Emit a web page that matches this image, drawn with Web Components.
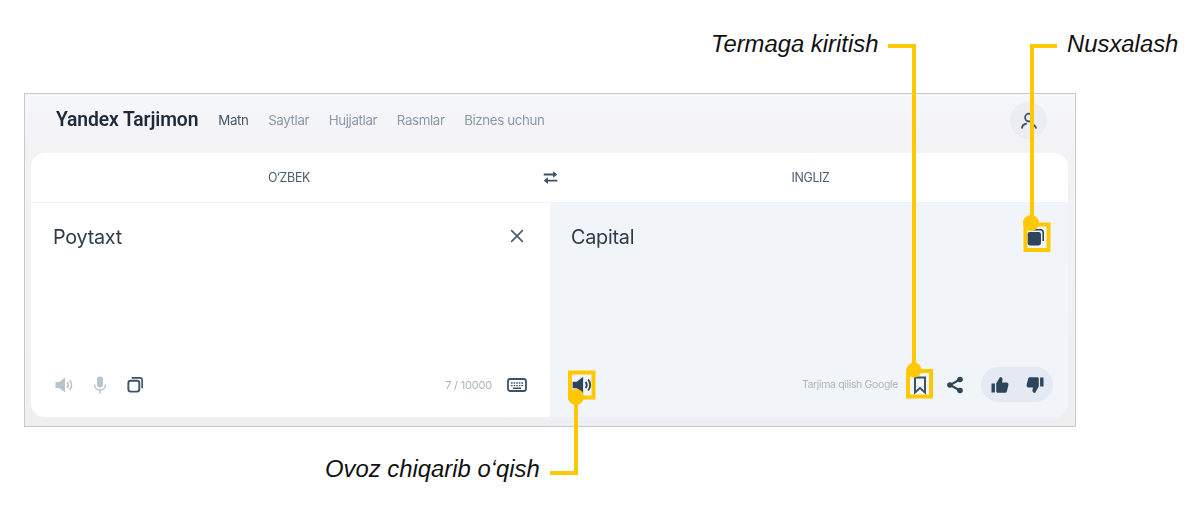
<!DOCTYPE html>
<html lang="uz">
<head>
<meta charset="utf-8">
<title>Yandex Tarjimon</title>
<style>
  html, body { margin: 0; background: #fff; }
  body { width: 1202px; height: 505px; overflow: hidden; position: relative; font-family: "Inter", "Liberation Sans", sans-serif; }
</style>
</head>
<body>
<ya-stage>
  <ya-window>
    <ya-header></ya-header>
    <ya-translator></ya-translator>
  </ya-window>
  <ya-callouts></ya-callouts>
</ya-stage>

<script>
const ICONS = {
  speaker: `<path fill="currentColor" d="M1.500 7h3.800L11 2.500v15L5.300 13H1.500z"/><path fill="none" stroke="currentColor" stroke-width="1.700" d="M13.200 7.200c1.300 1.600 1.300 4 0 5.600M15.600 5c2.400 2.900 2.400 7.100 0 10"/>`,
  mic: `<rect x="7" y="1.500" width="6" height="11" rx="3" fill="currentColor"/><path fill="none" stroke="currentColor" stroke-width="1.600" d="M4.500 9.500c0 3.200 2.400 5.500 5.500 5.500s5.500-2.300 5.500-5.500M10 15v3.500"/>`,
  copy: `<rect x="2.500" y="6" width="11.500" height="11.500" rx="2.400" fill="none" stroke="currentColor" stroke-width="2"/><path fill="none" stroke="currentColor" stroke-width="1.700" d="M6 3h8.500A2.500 2.500 0 0 1 17 5.500V14"/>`,
  copyFull: `<rect x="1.500" y="5" width="13.500" height="13.500" rx="2.400" fill="currentColor"/><path fill="none" stroke="currentColor" stroke-width="1.600" d="M7 2.800h7.800a2.400 2.400 0 0 1 2.400 2.400V14"/>`,
  keyboard: `<rect x="1" y="4" width="18" height="12" rx="2.200" fill="none" stroke="currentColor" stroke-width="1.800"/><path fill="none" stroke="currentColor" stroke-width="1.400" stroke-dasharray="1.600 1" d="M4 8h12M4 10.600h12"/><path stroke="currentColor" stroke-width="1.500" d="M6 13.300h8"/>`,
  swap: `<path fill="currentColor" d="M13 2.500l5 3.900-5 3.900V7.500H2V5.300h11zM7 9.700v2.800h11v2.200H7v2.800l-5-3.900z"/>`,
  close: `<path fill="none" stroke="currentColor" stroke-width="1.900" d="M3.500 3.500l13 13M16.500 3.500l-13 13"/>`,
  bookmark: `<path fill="none" stroke="currentColor" stroke-width="2" d="M5 2.500h10v15l-5-4.400-5 4.400z"/>`,
  share: `<circle cx="15" cy="4.500" r="2.800" fill="currentColor"/><circle cx="15" cy="15.500" r="2.800" fill="currentColor"/><circle cx="5" cy="10" r="2.800" fill="currentColor"/><path fill="none" stroke="currentColor" stroke-width="2" d="M15 4.500L5 10l10 5.500"/>`,
  up: `<path fill="currentColor" d="M1.500 8.500h3.400v9H1.500zM6.200 8.600L10 2c1.500 0 2.600 1 2.600 2.500L12 7.500h4.500c1.300 0 2.200 1.200 1.900 2.400l-1.500 6.300c-.3 1-1.100 1.500-2 1.500H7.700c-.8 0-1.500-.7-1.500-1.500z"/>`,
  down: `<path fill="currentColor" d="M18.500 11.500h-3.400v-9h3.400zM13.800 11.400L10 18c-1.500 0-2.600-1-2.600-2.500L8 12.500H3.500c-1.300 0-2.200-1.200-1.900-2.400l1.500-6.300c.3-1 1.100-1.500 2-1.500h7.200c.8 0 1.500.7 1.500 1.500z"/>`,
  user: `<circle cx="10" cy="6.600" r="3.900" fill="none" stroke="currentColor" stroke-width="1.800"/><path fill="none" stroke="currentColor" stroke-width="1.800" d="M2.800 17.500c.5-3.200 3-4.700 5-5M17.200 17.500c-.4-1.800-1.500-3.100-3-4"/>`
};

class YaIcon extends HTMLElement {
  connectedCallback() {
    const size = this.getAttribute('size') || 20;
    const color = this.getAttribute('color') || '#3c5267';
    this.attachShadow({ mode: 'open' }).innerHTML = `
      <style>:host { display: flex; width: ${size}px; height: ${size}px; color: ${color}; flex: none; } svg { width: 100%; height: 100%; display: block; }</style>
      <svg viewBox="0 0 20 20">${ICONS[this.getAttribute('name')]}</svg>`;
  }
}

class YaStage extends HTMLElement {
  constructor() {
    super();
    this.attachShadow({ mode: 'open' }).innerHTML = `
      <style>:host { display: block; padding: 93px 126px 0 24px; }</style>
      <slot></slot>`;
  }
}

class YaWindow extends HTMLElement {
  constructor() {
    super();
    this.attachShadow({ mode: 'open' }).innerHTML = `
      <style>
        :host {
          display: flex; flex-direction: column; box-sizing: border-box;
          width: 1052px; height: 334px; border: 1px solid #c9c9cc;
          padding: 0 7px 9px 6px;
          background: linear-gradient(#f6f7fb, #f3f3f6 50px, #efeff2);
          filter: blur(.5px);
        }
      </style>
      <slot></slot>`;
  }
}

class YaHeader extends HTMLElement {
  constructor() {
    super();
    this.attachShadow({ mode: 'open' }).innerHTML = `
      <style>
        :host { display: flex; align-items: center; box-sizing: border-box; height: 59px; padding: 0 21px 8px 25px; flex: none; }
        .logo { font: 600 19.300px "Roboto", sans-serif; color: #1d2a3a; letter-spacing: -.1px; margin-right: 20px; white-space: nowrap; }
        nav { display: flex; gap: 19.500px; font: 400 13.300px "Inter", sans-serif; letter-spacing: -.35px; color: #8b98a8; white-space: nowrap; }
        nav b { font-weight: 400; color: #44566a; }
        .avatar { margin-left: auto; margin-top: 2px; width: 37px; height: 37px; border-radius: 50%; background: #ebedf3; display: flex; align-items: center; justify-content: center; }
      </style>
      <div class="logo">Yandex Tarjimon</div>
      <nav><b>Matn</b><span>Saytlar</span><span>Hujjatlar</span><span>Rasmlar</span><span>Biznes uchun</span></nav>
      <div class="avatar"><ya-icon name="user" size="20"></ya-icon></div>`;
  }
}

class YaTranslator extends HTMLElement {
  constructor() {
    super();
    this.attachShadow({ mode: 'open' }).innerHTML = `
      <style>
        :host { display: grid; grid-template-columns: 519px 518px; grid-template-rows: 50px 1fr; flex: 1; border-radius: 14px; overflow: hidden; background: #fff; }
        .langs {
          grid-column: 1 / 3; display: grid; grid-template-columns: 1fr 20px 1fr; align-items: center; justify-items: center; text-align: center;
          font: 400 12.400px "Inter", sans-serif; letter-spacing: -.3px; color: #4a5c70; border-bottom: 1px solid #f3f3f6;
          box-sizing: border-box; padding-left: 1px;
        }
        .langs span:first-child { padding-left: 6px; }
        .langs span:last-child { padding-right: 7px; }
      </style>
      <div class="langs"><span>O‘ZBEK</span><ya-icon name="swap" size="17"></ya-icon><span>INGLIZ</span></div>
      <ya-panel text="Poytaxt">
        <ya-icon slot="action" name="close" size="18" color="#4b5f72" style="margin:0 1px 2px 0"></ya-icon>
        <ya-icon name="speaker" color="#b9c3cb" style="margin-left:1px"></ya-icon>
        <ya-icon name="mic" color="#b9c3cb" style="margin-left:16px"></ya-icon>
        <ya-icon name="copy" size="19" style="margin-left:16px"></ya-icon>
        <ya-count style="margin-left:auto">7 / 10000</ya-count>
        <ya-icon name="keyboard" style="margin-left:15px"></ya-icon>
      </ya-panel>
      <ya-panel text="Capital" tinted>
        <ya-icon slot="action" name="copyFull" color="#2d445a" style="margin-right:7px"></ya-icon>
        <ya-icon name="speaker" size="22" color="#2d445a"></ya-icon>
        <ya-count small style="margin-left:auto">Tarjima qilish Google</ya-count>
        <ya-icon name="bookmark" size="20" style="margin-left:12px"></ya-icon>
        <ya-icon name="share" size="20" color="#2d445a" style="margin-left:15px"></ya-icon>
        <ya-rating style="margin-left:16px"></ya-rating>
      </ya-panel>`;
  }
}

class YaPanel extends HTMLElement {
  connectedCallback() {
    this.attachShadow({ mode: 'open' }).innerHTML = `
      <style>
        :host { display: flex; flex-direction: column; background: #fff; padding: 20px 23px 15px 22px; box-sizing: border-box; min-height: 0; }
        :host([tinted]) { background: #f1f4f9; padding: 20px 15px 15px 21px; }
        .top { display: flex; align-items: center; justify-content: space-between; height: 28px; }
        .text { font: 400 19.800px "Inter", sans-serif; letter-spacing: -.25px; color: #2e3a47; }
        .bottom { display: flex; align-items: center; margin-top: auto; height: 35px; }
      </style>
      <div class="top"><span class="text">${this.getAttribute('text')}</span><slot name="action"></slot></div>
      <div class="bottom"><slot></slot></div>`;
  }
}

class YaCount extends HTMLElement {
  connectedCallback() {
    const small = this.hasAttribute('small');
    this.attachShadow({ mode: 'open' }).innerHTML = `
      <style>:host { display: block; font: 400 ${small ? 10.5 : 11}px "Inter", sans-serif; letter-spacing: ${small ? -.35 : -.2}px; color: #aab4c1; white-space: nowrap; }</style>
      <slot></slot>`;
  }
}

class YaRating extends HTMLElement {
  constructor() {
    super();
    this.attachShadow({ mode: 'open' }).innerHTML = `
      <style>:host { display: flex; align-items: center; justify-content: space-between; box-sizing: border-box; width: 72px; height: 35px; padding: 0 8px 0 9px; border-radius: 18px; background: #e4e9f3; }</style>
      <ya-icon name="up" size="20" color="#2d445a"></ya-icon>
      <ya-icon name="down" size="20" color="#2d445a"></ya-icon>`;
  }
}

// notes and yellow leader lines, drawn on top of the screenshot
class YaCallouts extends HTMLElement {
  constructor() {
    super();
    this.attachShadow({ mode: 'open' }).innerHTML = `
      <style>
        :host { position: absolute; inset: 0; pointer-events: none; }
        svg { position: absolute; inset: 0; }
        span { position: absolute; font: italic 400 23.850px "Liberation Sans", Arial, sans-serif; color: #111; white-space: nowrap; line-height: 28px; }
      </style>
      <svg width="1202" height="505" fill="none" stroke="#ffc800" stroke-width="4">
        <path d="M888 46h26V370"/>
        <circle cx="914" cy="370" r="7.500" fill="#ffc800" stroke="none"/>
        <rect x="908" y="371" width="23" height="25.500"/>
        <path d="M1057 46h-25V224" />
        <circle cx="1031" cy="223" r="8" fill="#ffc800" stroke="none"/>
        <rect x="1025.500" y="224.500" width="23" height="25.500"/>
        <path d="M550 473h26V398"/>
        <circle cx="576" cy="397" r="8" fill="#ffc800" stroke="none"/>
        <rect x="570" y="372.500" width="23.500" height="25"/>
      </svg>
      <span style="left:711px;top:30px">Termaga kiritish</span>
      <span style="left:1067px;top:30px">Nusxalash</span>
      <span style="left:325px;top:455px">Ovoz chiqarib o‘qish</span>`;
  }
}

customElements.define('ya-icon', YaIcon);
customElements.define('ya-stage', YaStage);
customElements.define('ya-window', YaWindow);
customElements.define('ya-header', YaHeader);
customElements.define('ya-translator', YaTranslator);
customElements.define('ya-panel', YaPanel);
customElements.define('ya-count', YaCount);
customElements.define('ya-rating', YaRating);
customElements.define('ya-callouts', YaCallouts);
</script>
</body>
</html>
